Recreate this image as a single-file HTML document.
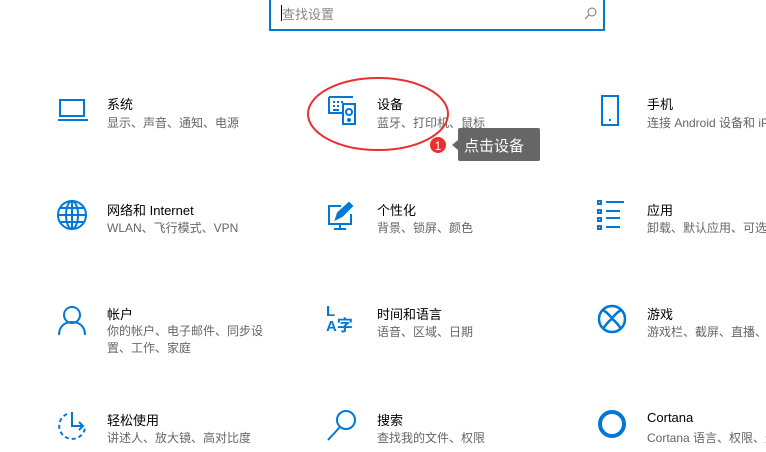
<!DOCTYPE html>
<html style="overflow:hidden"><head><meta charset="utf-8"><style>
body{margin:0;width:766px;height:452px;background:#fff;position:relative;overflow:hidden;font-family:"Liberation Sans","Noto Sans CJK SC",sans-serif}
.a{position:absolute;white-space:nowrap}
.t{font-size:13px;color:#000}
.s{font-size:12px;color:#666}
svg{position:absolute;overflow:visible}
</style></head><body>
<div class="a" style="left:269px;top:-3px;width:332px;height:30px;border:2px solid #0078d7"></div>
<div class="a" style="left:281px;top:5px;width:1px;height:16px;background:#000"></div>
<div class="a s" style="left:282px;top:4px;font-size:13px;color:#888">查找设置</div>
<svg style="left:584px;top:6px" width="14" height="14"><circle cx="8" cy="6" r="4" fill="none" stroke="#777" stroke-width="1"/><line x1="5" y1="9" x2="1" y2="13" stroke="#777"/></svg>

<svg style="left:57px;top:98px" width="32" height="26" fill="none" stroke="#0078d7" stroke-width="2"><rect x="3" y="2" width="24" height="16"/><path d="M1 22h30"/></svg>
<svg style="left:327px;top:95px" width="32" height="32" fill="none" stroke="#0078d7" stroke-width="2"><path d="M2 2h24M2 2v16h14"/><rect x="16" y="9" width="12" height="20"/><circle cx="22" cy="17" r="3"/><circle cx="22" cy="25" r="1"/><path d="M6 7h2M10 7h2M14 7h2M6 11h2M10 11h2M6 15h6"/></svg>
<svg style="left:597px;top:94px" width="30" height="34" fill="none" stroke="#0078d7" stroke-width="2"><rect x="5" y="2" width="16" height="29"/><path d="M12 26h2"/></svg>

<svg style="left:57px;top:200px" width="32" height="32" fill="none" stroke="#0078d7" stroke-width="2"><circle cx="15" cy="15" r="14"/><ellipse cx="15" cy="15" rx="6" ry="14"/><path d="M1 15h28M3 8h24M3 22h24M15 1v28"/></svg>
<svg style="left:327px;top:202px" width="32" height="30" fill="none" stroke="#0078d7" stroke-width="2"><path d="M14 4H2v18h22v-10M7 27h12M13 22v5"/><path d="M9 17l2-6 11-10 3 3-10 10z" fill="#0078d7"/></svg>
<svg style="left:597px;top:199px" width="32" height="32" fill="none" stroke="#0078d7" stroke-width="2"><rect x="1" y="2" width="3" height="3"/><rect x="1" y="11" width="3" height="3"/><rect x="1" y="19" width="3" height="3"/><rect x="1" y="27" width="3" height="3"/><path d="M9 3h18M9 12h14M9 19h14M9 28h14"/></svg>

<svg style="left:57px;top:305px" width="32" height="32" fill="none" stroke="#0078d7" stroke-width="2"><circle cx="15" cy="10" r="8"/><path d="M2 30c0-9 6-13 13-13s13 4 13 13"/></svg>
<div class="a" style="left:326px;top:304px;color:#0078d7;font-size:15px;font-weight:bold;line-height:15px">L<br>A<span style="font-size:16px">字</span></div>
<svg style="left:597px;top:304px" width="32" height="32" fill="none" stroke="#0078d7" stroke-width="2.5"><circle cx="15" cy="15" r="13"/><path d="M6 6c5 3 9 8 9 9M24 6c-5 3-9 8-9 9M6 25c3-5 7-9 9-10M24 25c-3-5-7-9-9-10"/></svg>

<svg style="left:57px;top:410px" width="32" height="32" fill="none" stroke="#0078d7" stroke-width="2"><path d="M10 4a13 13 0 1 0 18 14" stroke-dasharray="4 3"/><path d="M15 2v14h11M22 12l4 4-4 4"/></svg>
<svg style="left:327px;top:409px" width="32" height="32" fill="none" stroke="#0078d7" stroke-width="2"><circle cx="19" cy="11" r="9"/><path d="M13 18L1 31"/></svg>
<svg style="left:597px;top:409px" width="32" height="32" fill="none" stroke="#0078d7" stroke-width="4"><circle cx="15" cy="15" r="12"/></svg>

<div class="a t" style="left:107px;top:94px">系统</div><div class="a s" style="left:107px;top:114px">显示、声音、通知、电源</div>
<div class="a t" style="left:377px;top:94px">设备</div><div class="a s" style="left:377px;top:114px">蓝牙、打印机、鼠标</div>
<div class="a t" style="left:647px;top:94px">手机</div><div class="a s" style="left:647px;top:114px">连接 Android 设备和 iPhone</div>

<div class="a t" style="left:107px;top:200px">网络和 Internet</div><div class="a s" style="left:107px;top:219px">WLAN、飞行模式、VPN</div>
<div class="a t" style="left:377px;top:200px">个性化</div><div class="a s" style="left:377px;top:219px">背景、锁屏、颜色</div>
<div class="a t" style="left:647px;top:200px">应用</div><div class="a s" style="left:647px;top:219px">卸载、默认应用、可选功能</div>

<div class="a t" style="left:107px;top:304px">帐户</div><div class="a s" style="left:107px;top:323px;line-height:17px">你的帐户、电子邮件、同步设<br>置、工作、家庭</div>
<div class="a t" style="left:377px;top:304px">时间和语言</div><div class="a s" style="left:377px;top:323px">语音、区域、日期</div>
<div class="a t" style="left:647px;top:304px">游戏</div><div class="a s" style="left:647px;top:323px">游戏栏、截屏、直播、游戏模式</div>

<div class="a t" style="left:107px;top:410px">轻松使用</div><div class="a s" style="left:107px;top:429px">讲述人、放大镜、高对比度</div>
<div class="a t" style="left:377px;top:410px">搜索</div><div class="a s" style="left:377px;top:429px">查找我的文件、权限</div>
<div class="a t" style="left:647px;top:410px">Cortana</div><div class="a s" style="left:647px;top:429px">Cortana 语言、权限、通知</div>

<svg style="left:0;top:0" width="766" height="452"><ellipse cx="378" cy="114" rx="70" ry="36" fill="none" stroke="#e8302f" stroke-width="2"/><circle cx="438" cy="145" r="8" fill="#e8302f"/><text x="438" y="150" font-size="12" fill="#fff" text-anchor="middle" font-family="Liberation Sans">1</text></svg>
<div class="a" style="left:458px;top:128px;width:82px;height:33px;background:#666;border-radius:2px"></div>
<div class="a" style="left:452px;top:140px;width:0;height:0;border-top:5px solid transparent;border-bottom:5px solid transparent;border-right:6px solid #666"></div>
<div class="a" style="left:464px;top:135px;color:#fff;font-size:15px">点击设备</div>
</body></html>
